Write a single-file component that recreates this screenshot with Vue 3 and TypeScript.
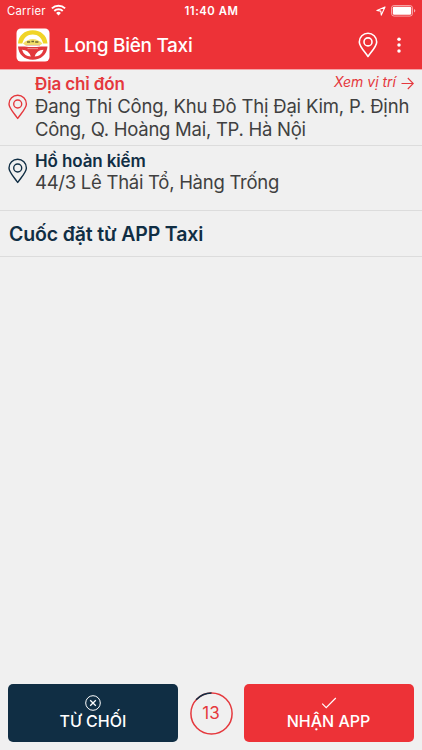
<script setup lang="ts">
import { computed, ref } from 'vue'

interface Stop {
  id: string
  title: string
  lines: string[]
  link?: string
}

const stops: Stop[] = [
  {
    id: 'pickup',
    title: 'Địa chỉ đón',
    lines: ['Đang Thi Công, Khu Đô Thị Đại Kim, P. Định', 'Công, Q. Hoàng Mai, TP. Hà Nội'],
    link: 'Xem vị trí',
  },
  { id: 'dropoff', title: 'Hồ hoàn kiểm', lines: ['44/3 Lê Thái Tổ, Hàng Trống'] },
]

const total = 15
const remaining = ref(13)
const circumference = 2 * Math.PI * 20.6
const elapsed = computed(() => `${((total - remaining.value) / total) * circumference} ${circumference}`)
</script>

<template>
  <div class="screen">
    <header class="header">
      <div class="status">
        <div class="carrier">
          <span class="carrier-name">Carrier</span>
          <svg class="wifi" width="15" height="12" viewBox="0 0 15 12">
            <g fill="none" stroke="#fff" stroke-width="1.9">
              <path d="M.9 4.4a9.4 9.4 0 0 1 13.2 0" />
              <path d="M3.3 7a6 6 0 0 1 8.4 0" />
            </g>
            <path d="M7.5 11.5 5.1 9a3.4 3.4 0 0 1 4.8 0z" fill="#fff" />
          </svg>
        </div>
        <span class="time">11:40 AM</span>
        <div class="indicators">
          <svg width="10" height="10" viewBox="0 0 10 10">
            <path d="M9 .9.9 4.5l3.9.6.5 4z" fill="none" stroke="#fff" stroke-width="1.1" stroke-linejoin="round" />
          </svg>
          <svg width="25" height="12" viewBox="0 0 25 12">
            <rect x=".5" y=".5" width="21" height="10.6" rx="2.6" fill="none" stroke="#fff" stroke-opacity=".55" />
            <rect x="1.8" y="1.8" width="18.4" height="8" rx="1.4" fill="#fff" />
            <path d="M23 4v3.6q1.3-.6 1.3-1.8T23 4z" fill="#fff" fill-opacity=".6" />
          </svg>
        </div>
      </div>
      <div class="bar">
        <svg class="logo" width="34" height="34" viewBox="0 0 34 34">
          <rect x=".5" y=".5" width="33" height="33" rx="4.500" fill="#fff" />
          <path d="M2 15.500C2.500 7.500 8.500 2.200 16.700 2.200S31 7.500 31.500 15.500h-4.300C25.500 9.500 22 6.500 16.700 6.500S8 9.500 6.300 15.500z" fill="#f0d427" />
          <path d="M7 15.500Q11.500 11 16.700 11T26.500 15.500L24.500 17H9z" fill="#f3df69" />
          <path d="M11 14h3.200M15.400 13.500h2.600M19.200 14h3.200" stroke="#6d6630" stroke-width="1.500" />
          <path d="M9.500 17.300h14.500" stroke="#dba79a" stroke-width=".8" />
          <path d="M2 18.500H8.500Q16.700 19.500 25 18.500h6.500C31 26.500 25 31.700 16.700 31.700S2.500 26.500 2 18.500z" fill="#e2393d" />
          <path d="M6 21.800q6.700.2 8.800 6.700Q8 28.200 6 21.800zM27.500 21.800q-6.700.2-8.800 6.700Q25.500 28.200 27.500 21.800z" fill="#fff" />
          <path d="M11.500 20.600h10.500" stroke="#f0a39f" stroke-width=".8" />
        </svg>
        <h1 class="title">Long Biên Taxi</h1>
        <svg class="map-pin" width="20" height="26" viewBox="0 0 20 26">
          <g fill="none" stroke="#fff" stroke-width="1.600" stroke-linejoin="round">
            <path d="M10 24.500C7.500 20.500 1.300 14.500 1.300 9.900a8.700 8.700 0 0 1 17.400 0c0 4.600-6.200 10.600-8.700 14.600z" />
            <circle cx="10" cy="9.900" r="4" />
          </g>
        </svg>
        <svg class="menu" width="4" height="16" viewBox="0 0 4 16" fill="#fff">
          <circle cx="2" cy="2.300" r="1.750" />
          <circle cx="2" cy="8.100" r="1.750" />
          <circle cx="2" cy="13.900" r="1.750" />
        </svg>
      </div>
    </header>

    <section v-for="stop in stops" :key="stop.id" class="stop" :class="stop.id">
      <svg class="stop-pin" width="20" height="26" viewBox="0 0 20 26">
        <g fill="none" stroke="currentColor" stroke-width="1.400" stroke-linejoin="round">
          <path d="M9.700 24.500C7.200 20.500 1 14.500 1 10a8.700 8.700 0 0 1 17.400 0c0 4.500-6.200 10.500-8.700 14.500z" />
          <circle cx="9.700" cy="10" r="4" />
        </g>
      </svg>
      <div class="stop-body">
        <div class="stop-head">
          <h2 class="stop-title">{{ stop.title }}</h2>
          <a v-if="stop.link" class="link">
            <span>{{ stop.link }}</span>
            <svg width="13" height="13" viewBox="0 0 13 13">
              <path d="M.5 6.500h11.700M6.800 1l5.500 5.500L6.800 12" fill="none" stroke="currentColor" stroke-width="1.100" />
            </svg>
          </a>
        </div>
        <p v-for="line in stop.lines" :key="line" class="line">{{ line }}</p>
      </div>
    </section>

    <section class="source">Cuốc đặt từ APP Taxi</section>

    <footer class="actions">
      <button class="btn reject">
        <svg width="16" height="16" viewBox="0 0 16 16" fill="none" stroke="#fff">
          <circle cx="8" cy="8" r="7.300" stroke-width="1" />
          <path d="m5.200 5.200 5.600 5.600m0-5.600-5.600 5.600" stroke-width="1.300" />
        </svg>
        <span>TỪ CHỐI</span>
      </button>
      <div class="timer">
        <svg class="ring" width="43" height="43" viewBox="0 0 43 43" fill="none">
          <circle cx="21.500" cy="21.500" r="20.600" stroke="#e5383d" stroke-width="1.500" />
          <circle cx="21.500" cy="21.500" r="20.600" stroke="#102e44" stroke-width="1.500" :stroke-dasharray="elapsed" transform="matrix(0 -1 -1 0 43 43)" />
        </svg>
        <span class="count">{{ remaining }}</span>
      </div>
      <button class="btn accept">
        <svg width="16" height="16" viewBox="0 0 16 16" fill="none" stroke="#fff">
          <path d="m1.200 8.600 4 4L14.800 3" stroke-width="1.200" />
        </svg>
        <span>NHẬN APP</span>
      </button>
    </footer>
  </div>
</template>

<style>
body {
  background: #f0f0f0;
}
</style>

<style scoped>
.screen {
  display: flex;
  flex-direction: column;
  width: 422px;
  height: 750px;
  overflow: hidden;
  box-sizing: border-box;
  background: #f0f0f0;
  font-family: Inter, "Liberation Sans", sans-serif;
  white-space: nowrap;
}

h1,
h2,
p {
  margin: 0;
}

svg {
  display: block;
  flex: none;
}

.header {
  flex: none;
  box-sizing: border-box;
  height: 70px;
  border-bottom: 1px solid #f4a5a7;
  background: #ed3237;
  color: #fff;
}

.status {
  display: grid;
  grid-template-columns: 1fr auto 1fr;
  align-items: center;
  height: 22px;
  padding: 0 6px 0 7px;
  font-size: 11.3px;
}

.carrier {
  display: flex;
  align-items: center;
  gap: 5px;
}

.carrier-name {
  letter-spacing: 0.25px;
}

.wifi {
  margin-top: -2px;
}

.time {
  font-weight: 600;
  letter-spacing: 0.55px;
}

.indicators {
  display: flex;
  align-items: center;
  justify-content: flex-end;
  gap: 5px;
}

.bar {
  display: flex;
  align-items: center;
  height: 46px;
  padding: 0 21px 0 16px;
}

.title {
  flex: 1;
  margin-left: 14px;
  font-size: 19px;
  font-weight: 500;
  letter-spacing: -0.3px;
}

.menu {
  margin-left: 19px;
}

.stop {
  display: flex;
  flex: none;
  box-sizing: border-box;
  border-bottom: 1px solid #dcdcdc;
  padding: 0 8px;
}

.pickup {
  height: 76px;
  padding-top: 3px;
  color: #e5383d;
}

.dropoff {
  height: 65px;
  padding-top: 4px;
  color: #102e44;
}

.pickup .stop-pin {
  margin-top: 21px;
}

.dropoff .stop-pin {
  margin-top: 8px;
}

.stop-body {
  flex: 1;
  min-width: 0;
  margin-left: 7px;
}

.stop-head {
  display: flex;
  justify-content: space-between;
  height: 22px;
}

.stop-title {
  font-size: 17px;
  font-weight: 600;
  letter-spacing: -0.12px;
  line-height: 22px;
}

.link {
  display: flex;
  align-items: center;
  gap: 5px;
  height: 20px;
  font-size: 14px;
  font-style: italic;
}

.link span {
  margin-top: -3px;
}

.line {
  color: #404040;
  font-size: 18.5px;
  letter-spacing: -0.18px;
  line-height: 23px;
}

.line:nth-child(3),
.dropoff .line {
  letter-spacing: -0.27px;
}

.dropoff .line {
  margin-top: -1px;
}

.source {
  flex: none;
  box-sizing: border-box;
  height: 46px;
  padding: 0 9px;
  border-bottom: 1px solid #dcdcdc;
  color: #102e44;
  font-size: 19.5px;
  font-weight: 600;
  letter-spacing: -0.15px;
  line-height: 46px;
}

.actions {
  display: flex;
  align-items: center;
  justify-content: space-between;
  margin-top: auto;
  padding: 0 8px 8px;
}

.btn {
  display: flex;
  flex-direction: column;
  align-items: center;
  box-sizing: border-box;
  width: 170px;
  height: 58px;
  padding: 11px 0 0;
  border: 0;
  border-radius: 5px;
  color: #fff;
  font-family: inherit;
  font-size: 16px;
  font-weight: 500;
  line-height: 20px;
}

.reject {
  background: #102e44;
}

.accept {
  background: #ed3237;
}

.accept span {
  margin-left: -1px;
}

.timer {
  display: grid;
  place-items: center;
}

.ring,
.count {
  grid-area: 1 / 1;
}

.count {
  color: #e5383d;
  font-size: 17px;
}
</style>
